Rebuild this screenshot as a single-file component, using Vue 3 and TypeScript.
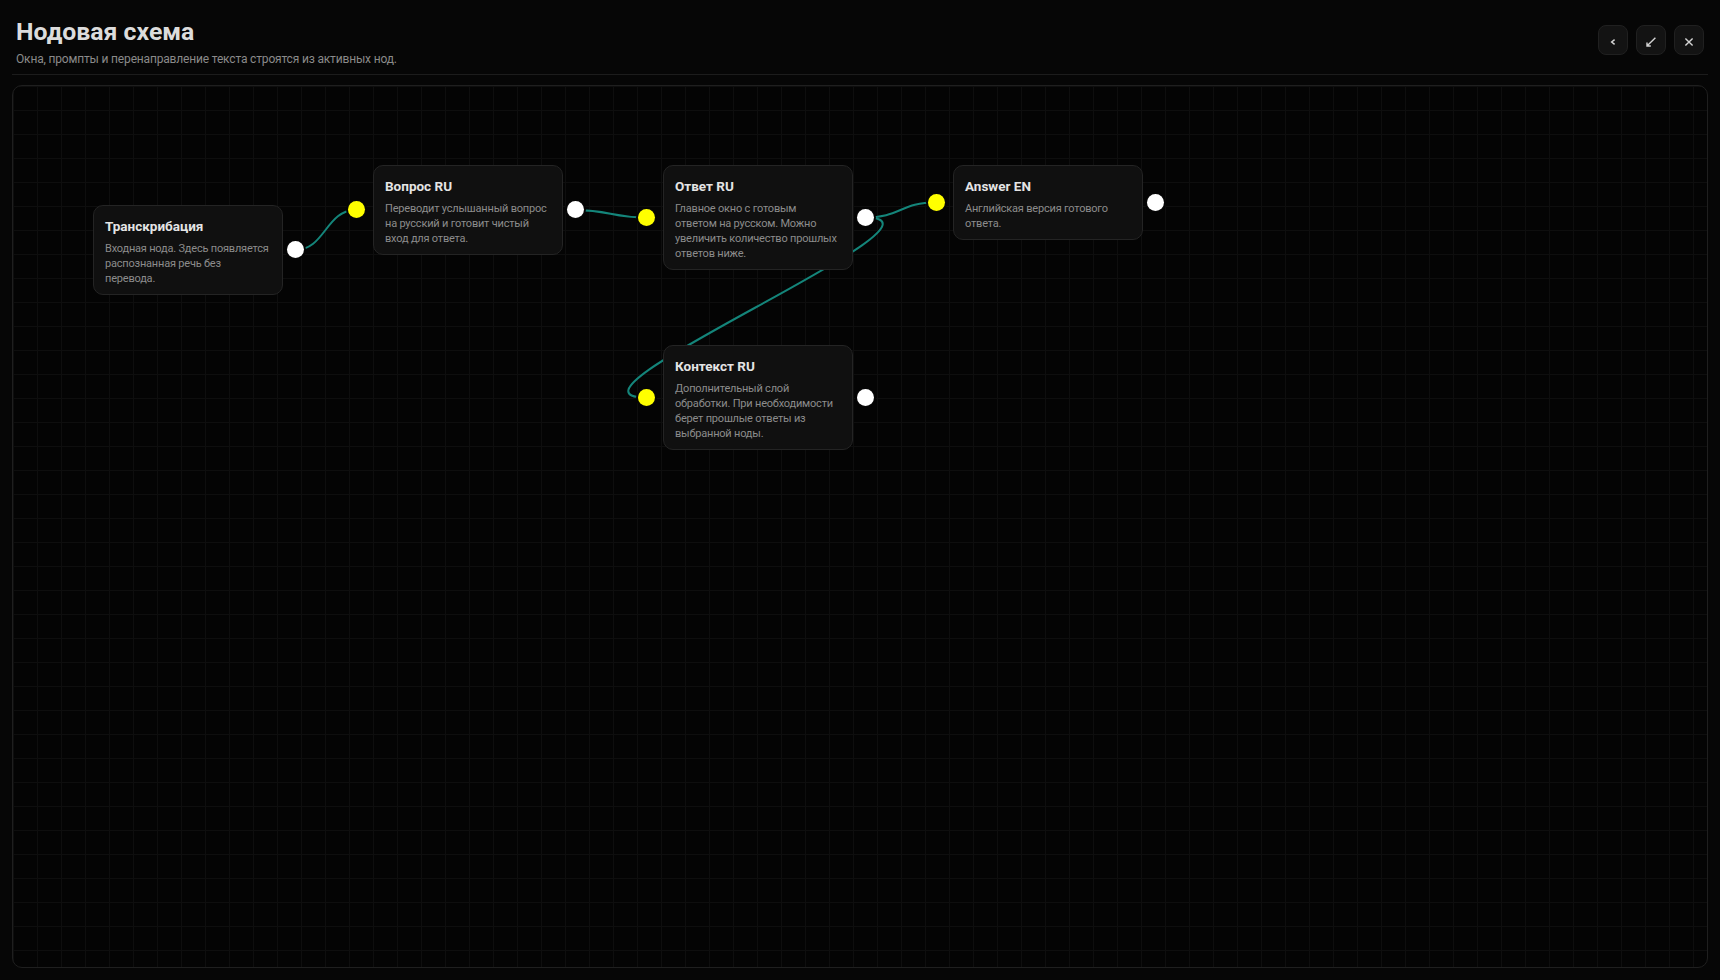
<script setup lang="ts">
import { computed } from 'vue'

interface FlowNode {
  id: string
  title: string
  text: string
  x: number
  y: number
  h: number
  input: boolean
}

const nodes: FlowNode[] = [
  { id: 'tr', title: 'Транскрибация', text: 'Входная нода. Здесь появляется распознанная речь без перевода.', x: 80, y: 119, h: 90, input: false },
  { id: 'q', title: 'Вопрос RU', text: 'Переводит услышанный вопрос на русский и готовит чистый вход для ответа.', x: 360, y: 79, h: 90, input: true },
  { id: 'a', title: 'Ответ RU', text: 'Главное окно с готовым ответом на русском. Можно увеличить количество прошлых ответов ниже.', x: 650, y: 79, h: 105, input: true },
  { id: 'en', title: 'Answer EN', text: 'Английская версия готового ответа.', x: 940, y: 79, h: 75, input: true },
  { id: 'ctx', title: 'Контекст RU', text: 'Дополнительный слой обработки. При необходимости берет прошлые ответы из выбранной ноды.', x: 650, y: 259, h: 105, input: true }
]

const links: [string, string][] = [
  ['tr', 'q'],
  ['q', 'a'],
  ['a', 'en'],
  ['a', 'ctx']
]

const byId = (id: string) => nodes.find((n) => n.id === id) as FlowNode

const wires = computed(() =>
  links.map(([from, to]) => {
    const a = byId(from)
    const b = byId(to)
    const x1 = a.x + 190 + 12
    const y1 = a.y + a.h / 2
    const x2 = b.x - 17
    const y2 = b.y + b.h / 2
    const d = Math.abs(x2 - x1) * 0.5
    return `M ${x1} ${y1} C ${x1 + d} ${y1}, ${x2 - d} ${y2}, ${x2} ${y2}`
  })
)

const nodeStyle = (n: FlowNode) => ({ left: `${n.x}px`, top: `${n.y}px`, height: `${n.h}px` })
</script>

<template>
  <div class="page">
    <header class="head">
      <div class="head-text">
        <h1 class="title">Нодовая схема</h1>
        <p class="sub">Окна, промпты и перенаправление текста строятся из активных нод.</p>
      </div>
      <div class="actions">
        <button class="btn" type="button" aria-label="Назад">
          <svg viewBox="0 0 12 12" width="12" height="12"><path d="M7.6 3.6 4.6 6l3 2.4" /></svg>
        </button>
        <button class="btn" type="button" aria-label="Свернуть">
          <svg viewBox="0 0 12 12" width="12" height="12"><path d="M10.4 1.8 2.2 9.8M2 6.4v3.6h3.8" /></svg>
        </button>
        <button class="btn" type="button" aria-label="Закрыть">
          <svg viewBox="0 0 12 12" width="12" height="12"><path d="M2.4 2.4l7.2 7.2M9.6 2.4l-7.2 7.2" /></svg>
        </button>
      </div>
    </header>
    <main class="canvas">
      <svg class="wires">
        <path v-for="(d, i) in wires" :key="i" :d="d" />
      </svg>
      <article v-for="n in nodes" :key="n.id" class="node" :style="nodeStyle(n)">
        <span v-if="n.input" class="port port-in"></span>
        <h2 class="node-title">{{ n.title }}</h2>
        <p class="node-text">{{ n.text }}</p>
        <span class="port port-out"></span>
      </article>
    </main>
  </div>
</template>

<style scoped>
.page {
  box-sizing: border-box;
  height: 980px;
  padding: 0 12px 12px;
  display: flex;
  flex-direction: column;
  background: #060606;
  font-family: Roboto, "Noto Sans", sans-serif;
  overflow: hidden;
}
.head {
  box-sizing: border-box;
  height: 75px;
  padding: 0 4px 0 4px;
  display: flex;
  justify-content: space-between;
  align-items: flex-start;
  border-bottom: 1px solid #1c1c1c;
  flex: none;
}
.title {
  margin: 17px 0 0;
  font-size: 24.8px;
  line-height: 30px;
  font-weight: 700;
  color: #dcdcdc;
}
.sub {
  margin: 4px 0 0;
  font-size: 12px;
  line-height: 16px;
  letter-spacing: -0.17px;
  color: #8a8a8a;
}
.actions {
  display: flex;
  gap: 8px;
  margin-top: 25px;
}
.btn {
  box-sizing: border-box;
  width: 30px;
  height: 30px;
  padding: 0;
  display: flex;
  align-items: center;
  justify-content: center;
  background: #131313;
  border: 1px solid #202020;
  border-radius: 8px;
}
.btn svg {
  display: block;
  margin-top: 3px;
  fill: none;
  stroke: #d4d4d4;
  stroke-width: 1.4;
}
.canvas {
  position: relative;
  flex: 1;
  margin-top: 10px;
  border: 1px solid #1f1f1f;
  border-radius: 10px;
  overflow: hidden;
  background-color: #040404;
  background-image:
    linear-gradient(to right, #0e0e0e 1px, transparent 1px),
    linear-gradient(to bottom, #0e0e0e 1px, transparent 1px);
  background-size: 24px 24px;
  background-position: 0 0;
}
.wires {
  position: absolute;
  inset: 0;
  width: 100%;
  height: 100%;
  fill: none;
  stroke: #14857a;
  stroke-width: 2;
}
.node {
  position: absolute;
  box-sizing: border-box;
  width: 190px;
  padding: 10px 12px 7px 11px;
  background: #101010;
  border: 1px solid #242424;
  border-radius: 10px;
}
.node-title {
  margin: 0 0 5px;
  font-size: 13.5px;
  line-height: 20px;
  font-weight: 700;
  color: #e4e4e4;
}
.node-text {
  margin: 0;
  font-size: 11px;
  line-height: 15px;
  letter-spacing: -0.2px;
  color: #8c8c8c;
}
.port {
  position: absolute;
  top: 50%;
  width: 17px;
  height: 17px;
  margin-top: -9px;
  border-radius: 50%;
  box-shadow: 0 0 0 2px #050505;
}
.port-in {
  left: -26.5px;
  background: #ffff00;
}
.port-out {
  right: -21.5px;
  background: #fff;
}
</style>
